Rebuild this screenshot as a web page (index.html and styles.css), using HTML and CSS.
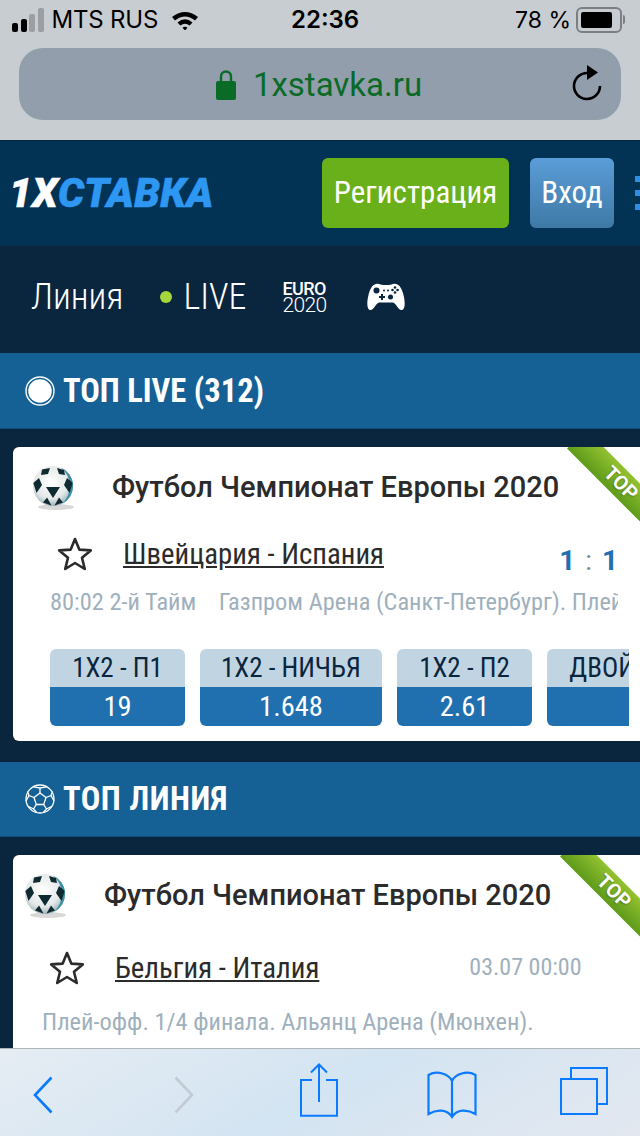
FILE: index.html
```html
<!DOCTYPE html>
<html lang="ru">
<head>
    <meta charset="UTF-8">
    <meta name="viewport" content="width=device-width, initial-scale=1.0">
    <title>1xСтавка</title>
    <link rel="stylesheet" href="styles.css">
</head>
<body>
    <svg class="defs" width="0" height="0">
        <defs>
            <radialGradient id="ball-bg" cx="45%" cy="40%" r="60%">
                <stop offset="0" stop-color="#ffffff"/>
                <stop offset="0.7" stop-color="#e4e8e8"/>
                <stop offset="1" stop-color="#9fb4bb"/>
            </radialGradient>
            <symbol id="ball" viewBox="0 -3 44 50">
                <ellipse cx="25" cy="42" rx="18" ry="3" fill="#d8d8d8"/>
                <circle cx="22" cy="21" r="20" fill="url(#ball-bg)"/>
                <path d="M30 2.500 A20 20 0 0 1 31 38.800 A24 24 0 0 0 30 2.500 Z" fill="#3d8fa8"/>
                <path d="M11 4.500 L19 3 L17 9 L10 10 Z M26 3 L33 5 L34 10 L28 9 Z M15 22 L29 22 L22 33 Z" fill="#0f2a30"/>
                <path d="M2.300 18 L8 13 L11 20 L5.500 28 Z M36 13 L41.700 18 L38.500 28 L33 20 Z M12 37.500 L16 32.500 L20.500 40.500 Z M32 37.500 L28 32.500 L23.500 40.500 Z" fill="#0f2a30"/>
            </symbol>
            <symbol id="star" viewBox="0 0 36 36">
                <path d="M18 3 L22.300 13.600 L33.800 14.400 L25 21.800 L27.800 33 L18 27 L8.200 33 L11 21.800 L2.200 14.400 L13.700 13.600 Z" fill="none" stroke="#2b2b2b" stroke-width="2.600" stroke-linejoin="round"/>
            </symbol>
        </defs>
    </svg>

    <div class="browser-top">
        <div class="status-bar">
            <div class="status-left">
                <div class="signal">
                    <span class="bar on b1"></span><span class="bar on b2"></span><span class="bar b3"></span><span class="bar b4"></span>
                </div>
                <span class="carrier">MTS RUS</span>
                <svg class="wifi" viewBox="0 0 28 20" width="28" height="20">
                    <path d="M1 7 Q14 -3 27 7 L24 10.500 Q14 2.500 4 10.500 Z M6.500 12.500 Q14 6 21.500 12.500 L18.700 15.500 Q14 11.800 9.300 15.500 Z M11.500 17.800 Q14 15.600 16.500 17.800 L14 20.500 Z" fill="#000"/>
                </svg>
            </div>
            <span class="clock">22:36</span>
            <div class="status-right">
                <span class="percent">78 %</span>
                <div class="battery"><span class="battery-level"></span></div>
                <span class="battery-tip"></span>
            </div>
        </div>
        <div class="url-bar">
            <svg class="lock" viewBox="0 0 20 32" width="20" height="32">
                <path d="M5 14 V8.500 a5 5 0 0 1 10 0 V14" fill="none" stroke="#0a6b26" stroke-width="2.400"/>
                <rect x="0" y="13" width="20" height="19" rx="2" fill="#0a6b26"/>
            </svg>
            <span class="url-text">1xstavka.ru</span>
            <svg class="reload" viewBox="0 0 32 40" width="32" height="40">
                <path d="M17 9 A13 13 0 1 0 29 22" fill="none" stroke="#000" stroke-width="2.600"/>
                <path d="M16 1 L27 8.500 L16 16 Z" fill="#000"/>
            </svg>
        </div>
    </div>

    <div class="page">
        <header class="site-header">
            <div class="logo"><span class="logo-white">1X</span>СТАВКА</div>
            <a class="btn btn-reg">Регистрация</a>
            <a class="btn btn-login">Вход</a>
            <div class="burger"><span></span><span></span><span></span></div>
        </header>

        <nav class="site-nav">
            <span class="nav-item">Линия</span>
            <span class="nav-live"><i class="live-dot"></i>LIVE</span>
            <span class="euro"><b>EURO</b><span>2020</span></span>
            <svg class="gamepad" viewBox="0 0 38 28" width="38" height="28">
                <path d="M9 1 C12 0 14 2 16 2 H22 C24 2 26 0 29 1 C33 2 35 6 36.500 12 C38.500 20 38 27 34.500 27 C31 27 29 20 26 19.500 H12 C9 20 7 27 3.500 27 C0 27 -0.500 20 1.500 12 C3 6 5 2 9 1 Z" fill="#fff"/>
                <circle cx="9.500" cy="7.500" r="3" fill="#0a263f"/>
                <path d="M12 13 h2 v-2 h2 v2 h2 v2 h-2 v2 h-2 v-2 h-2 Z" fill="#0a263f"/>
                <circle cx="23.500" cy="14" r="2.500" fill="#0a263f"/>
                <circle cx="28" cy="4.500" r="1.300" fill="#0a263f"/><circle cx="28" cy="9.500" r="1.300" fill="#0a263f"/>
                <circle cx="25.500" cy="7" r="1.300" fill="#0a263f"/><circle cx="30.500" cy="7" r="1.300" fill="#0a263f"/>
                <circle cx="17" cy="7.500" r="1" fill="#0a263f"/><circle cx="21" cy="7.500" r="1" fill="#0a263f"/>
            </svg>
        </nav>

        <section class="section-head">
            <svg class="section-icon" viewBox="0 0 30 30" width="30" height="30">
                <circle cx="15" cy="15" r="14" fill="none" stroke="#fff" stroke-width="1.400"/>
                <circle cx="15" cy="15" r="11.800" fill="#fff"/>
            </svg>
            <span>ТОП LIVE (312)</span>
        </section>

        <article class="card card-live">
            <div class="ribbon">TOP</div>
            <div class="card-title">
                <svg class="ball" width="44" height="50"><use href="#ball"/></svg>
                <span>Футбол Чемпионат Европы 2020</span>
            </div>
            <div class="match">
                <svg class="star" width="36" height="36"><use href="#star"/></svg>
                <a class="teams">Швейцария - Испания</a>
                <span class="score"><b>1</b> : <b>1</b></span>
            </div>
            <div class="meta">80:02 2-й Тайм &nbsp;&nbsp; Газпром Арена (Санкт-Петербург). Плей-офф. 1/4 финала</div>
            <div class="odds">
                <div class="odd w135"><span class="odd-name">1Х2 - П1</span><span class="odd-value">19</span></div>
                <div class="odd w182"><span class="odd-name">1Х2 - НИЧЬЯ</span><span class="odd-value">1.648</span></div>
                <div class="odd w135"><span class="odd-name">1Х2 - П2</span><span class="odd-value">2.61</span></div>
                <div class="odd w236"><span class="odd-name">ДВОЙНОЙ ШАНС</span><span class="odd-value">1.1</span></div>
            </div>
        </article>

        <section class="section-head section-line">
            <svg class="section-icon" viewBox="0 0 30 30" width="30" height="30">
                <g fill="none" stroke="#fff" stroke-width="1.300">
                    <circle cx="15" cy="15" r="14"/>
                    <path d="M15 9 L21 13.500 L18.700 20.500 H11.300 L9 13.500 Z"/>
                    <path d="M15 9 V4 M15 4 L8.500 2.800 M15 4 L21.500 2.800 M21 13.500 L26 11.500 L27.500 7.500 M26 11.500 L29 17 M18.700 20.500 L21.500 25 L26.500 22.500 M21.500 25 L18 28.600 M11.300 20.500 L8.500 25 L3.500 22.500 M8.500 25 L12 28.600 M9 13.500 L4 11.500 L2.500 7.500 M4 11.500 L1 17"/>
                </g>
            </svg>
            <span>ТОП ЛИНИЯ</span>
        </section>

        <article class="card card-line">
            <div class="ribbon">TOP</div>
            <div class="card-title">
                <svg class="ball" width="44" height="50"><use href="#ball"/></svg>
                <span>Футбол Чемпионат Европы 2020</span>
            </div>
            <div class="match">
                <svg class="star" width="36" height="36"><use href="#star"/></svg>
                <a class="teams">Бельгия - Италия</a>
                <span class="match-date">03.07 00:00</span>
            </div>
            <div class="meta">Плей-офф. 1/4 финала. Альянц Арена (Мюнхен).</div>
        </article>
    </div>

    <div class="browser-bottom">
        <svg viewBox="0 0 20 38" width="20" height="38" class="tool-back">
            <path d="M18.500 1.500 L2 19 L18.500 36.500" fill="none" stroke="#0a7aff" stroke-width="2.600"/>
        </svg>
        <svg viewBox="0 0 20 38" width="20" height="38" class="tool-next">
            <path d="M1.500 1.500 L18 19 L1.500 36.500" fill="none" stroke="#c2cbd3" stroke-width="2.600"/>
        </svg>
        <svg viewBox="0 0 38 54" width="38" height="54" class="tool-share">
            <path d="M12 17 H1 V52.800 H37 V17 H26 M19 39 V2 M11 9.500 L19 1.500 L27 9.500" fill="none" stroke="#0a7aff" stroke-width="2"/>
        </svg>
        <svg viewBox="0 0 50 48" width="50" height="48" class="tool-book">
            <path d="M25 10 C22 3 10 -1 1.500 4 V43 C10 38 20 38 25 46 C30 38 40 38 48.500 43 V4 C40 -1 28 3 25 10 V46" fill="none" stroke="#0a7aff" stroke-width="2.200"/>
        </svg>
        <svg viewBox="0 0 48 48" width="48" height="48" class="tool-tabs">
            <path d="M11 12 V1 H47 V37 H37" fill="none" stroke="#0a7aff" stroke-width="2"/>
            <rect x="1" y="12" width="36" height="35" fill="none" stroke="#0a7aff" stroke-width="2"/>
        </svg>
    </div>
</body>
</html>
```

FILE: styles.css
```css
/* Base */
* {
    box-sizing: border-box;
    margin: 0;
    padding: 0;
}

html, body {
    width: 640px;
    height: 1136px;
    overflow: hidden;
}

body {
    display: flex;
    flex-direction: column;
    font-family: Roboto, "Noto Sans", sans-serif;
    background: #0a263f;
}

.defs {
    position: absolute;
}

/* Safari top */
.browser-top {
    flex: none;
    height: 140px;
    background: #c8cdd2;
}

.status-bar {
    position: relative;
    display: flex;
    align-items: center;
    justify-content: space-between;
    height: 48px;
    padding: 0 15px 9px 12px;
    font-family: Inter, Roboto, sans-serif;
    font-size: 24px;
    color: #000;
}

.status-left, .status-right, .signal {
    display: flex;
    align-items: center;
}

.signal {
    align-items: flex-end;
    gap: 2.500px;
    height: 24px;
    margin-right: 8px;
}

.bar {
    width: 6px;
    border-radius: 2px;
    background: #9b9ea2;
}

.bar.on {
    background: #000;
}

.b1 { height: 9px; }
.b2 { height: 13px; }
.b3 { height: 18px; }
.b4 { height: 24px; }

.carrier {
    letter-spacing: -0.2px;
}

.wifi {
    margin-left: 13px;
}

.clock {
    position: absolute;
    left: 291px;
    font-weight: 600;
}

.percent {
    margin-right: 5px;
    font-size: 23px;
}

.battery {
    width: 46px;
    height: 26px;
    padding: 3px;
    border: 2px solid #7c7f83;
    border-radius: 6px;
}

.battery-level {
    display: block;
    width: 31px;
    height: 16px;
    background: #000;
    border-radius: 2px;
}

.battery-tip {
    width: 2px;
    height: 9px;
    margin-left: 1px;
    background: #7c7f83;
    border-radius: 0 2px 2px 0;
}

.url-bar {
    position: relative;
    display: flex;
    align-items: center;
    justify-content: center;
    gap: 17px;
    height: 72px;
    margin: 0 19px;
    padding-right: 2px;
    background: #929eac;
    border-radius: 24px;
}

.url-text {
    font-size: 33px;
    color: #0a6b26;
}

.reload {
    position: absolute;
    right: 18px;
    top: 16px;
}

/* Site header */
.page {
    flex: 1;
    min-height: 0;
    overflow: hidden;
}

.site-header {
    display: flex;
    align-items: center;
    height: 106px;
    padding: 0 0 2px 9px;
    background: #023355;
    border-top: 1px solid #01253f;
}

.logo {
    flex: none;
    width: 313px;
    font-size: 41px;
    font-weight: 900;
    font-style: italic;
    letter-spacing: 0.3px;
    color: #2e97f2;
    -webkit-text-stroke: 0.6px currentColor;
}

.logo-white {
    color: #fff;
}

.btn {
    flex: none;
    display: flex;
    align-items: center;
    justify-content: center;
    height: 70px;
    border-radius: 6px;
    color: #fff;
    font-size: 31px;
    font-stretch: 85%;
}

.btn-reg {
    width: 187px;
    background: #6ab01a;
}

.btn-login {
    width: 84px;
    margin-left: 21px;
    background: linear-gradient(#5a9dd8, #3f7aa6);
}

.burger {
    flex: none;
    display: flex;
    flex-direction: column;
    gap: 8px;
    margin-left: 21px;
}

.burger span {
    display: block;
    width: 6px;
    height: 6px;
    background: #2d8fdf;
}

/* Nav */
.site-nav {
    display: flex;
    align-items: center;
    height: 107px;
    padding: 0 0 5px 31px;
    background: #0a263f;
    color: #fff;
    font-size: 36px;
    font-weight: 300;
    font-stretch: 85%;
}

.nav-live {
    display: flex;
    align-items: center;
    margin-left: 36px;
}

.live-dot {
    width: 12px;
    height: 12px;
    margin-right: 12px;
    border-radius: 50%;
    background: #a5d63a;
}

.euro {
    display: flex;
    flex-direction: column;
    margin-left: 36px;
    line-height: 17px;
    font-stretch: 100%;
}

.euro b {
    font-weight: 500;
    font-size: 18px;
    letter-spacing: -0.6px;
}

.euro span {
    font-size: 21px;
    letter-spacing: -0.6px;
}

.gamepad {
    margin-left: 40px;
}

/* Section headers */
.section-head {
    display: flex;
    align-items: center;
    gap: 8px;
    height: 76px;
    padding-left: 25px;
    background: #156094;
    border-bottom: 1px solid #0d4d7c;
    color: #fff;
    font-size: 32.5px;
    font-weight: 700;
    font-stretch: 85%;
}

.section-line {
    height: 75px;
    margin-top: 21px;
    letter-spacing: 0.5px;
}

/* Cards */
.card {
    position: relative;
    margin: 18px 0 0 13px;
    overflow: hidden;
    background: #fff;
    border-radius: 6px 0 0 6px;
}

.card-live {
    height: 294px;
    padding: 15px 11px 0 18px;
}

.card-line {
    height: 300px;
    padding: 15px 0 0 10px;
}

.ribbon {
    position: absolute;
    top: 21px;
    right: -39px;
    width: 120px;
    height: 27px;
    padding-left: 5px;
    line-height: 27px;
    text-align: center;
    transform: rotate(45deg);
    background: linear-gradient(#93c231, #5e9a1a);
    color: #fff;
    font-size: 20px;
    font-weight: 700;
    text-shadow: 0 1px 2px rgba(0,0,0,0.3);
}

.card-line .ribbon {
    right: -32px;
}

.card-title {
    display: flex;
    align-items: center;
    gap: 37px;
    height: 50px;
    color: #2b2b2b;
    font-size: 29px;
    font-weight: 500;
}

.match {
    display: flex;
    align-items: center;
    height: 40px;
    margin-top: 22px;
    padding-left: 26px;
    color: #2b2b2b;
    font-size: 28.8px;
}

.star {
    flex: none;
}

.teams {
    margin-left: 30px;
    text-decoration: underline;
    font-stretch: 85%;
}

.score {
    position: absolute;
    right: 22px;
    top: 97px;
    color: #7f8b94;
    font-size: 28px;
    word-spacing: 3px;
}

.score b {
    color: #2070b0;
    font-weight: 700;
}

.match-date {
    margin-left: 150px;
    margin-bottom: 3px;
    color: #9fb0bd;
    font-size: 24px;
    font-stretch: 85%;
}

.card-line .match {
    margin-top: 28px;
}

.meta {
    width: 568px;
    margin: 13px 0 0 19px;
    overflow: hidden;
    white-space: nowrap;
    color: #9fb0bd;
    font-size: 24.4px;
    font-stretch: 85%;
}

.card-line .meta {
    margin-top: 19px;
}

/* Odds */
.odds {
    display: flex;
    gap: 15px;
    width: 579px;
    margin: 33px 0 0 19px;
    overflow: hidden;
}

.odd {
    flex: none;
    overflow: hidden;
    border-radius: 6px;
    text-align: center;
    white-space: nowrap;
    font-stretch: 85%;
}

.w135 { width: 135px; }
.w182 { width: 182px; }
.w236 { width: 236px; }

.odd-name, .odd-value {
    display: block;
}

.odd-name {
    height: 38px;
    line-height: 38px;
    background: #c1d4e2;
    color: #0a263f;
    font-size: 27px;
}

.odd-value {
    height: 39px;
    line-height: 39px;
    background: #2070b0;
    color: #fff;
    font-size: 28.5px;
}

/* Safari bottom */
.browser-bottom {
    position: relative;
    flex: none;
    height: 88px;
    background: linear-gradient(150deg, #e6edf3, #d3e4f2 50%, #e3e8f0);
    border-top: 1px solid #b0b5b8;
}

.browser-bottom svg {
    position: absolute;
}

.tool-back { left: 33px; top: 27px; }
.tool-next { left: 174px; top: 27px; }
.tool-share { left: 300px; top: 14px; }
.tool-book { left: 427px; top: 22px; }
.tool-tabs { left: 560px; top: 18px; }
```
